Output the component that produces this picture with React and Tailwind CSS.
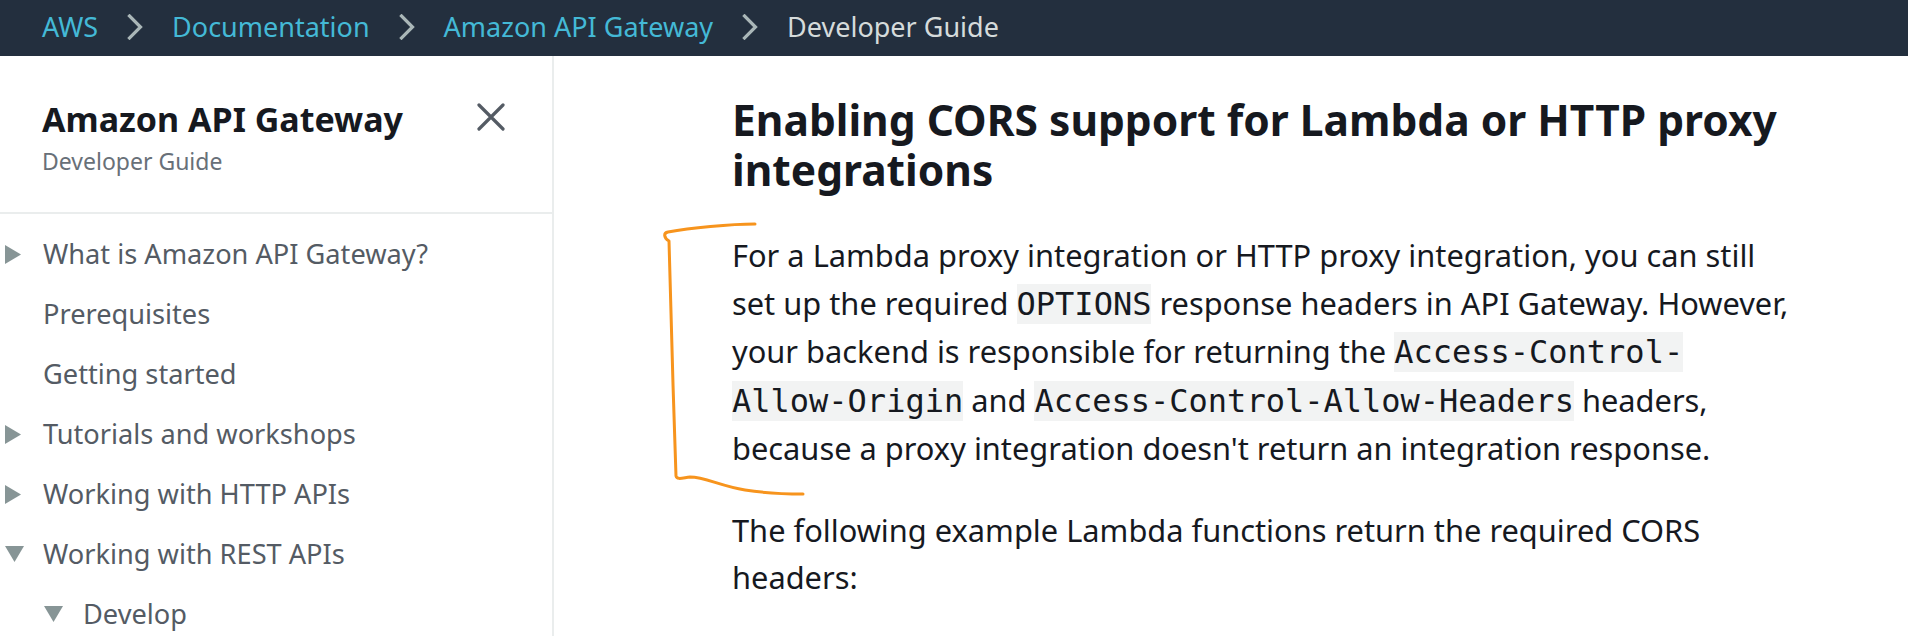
import React from "react";

const Chevron = () => (
  <svg width="16" height="26" viewBox="0 0 16 26" className="shrink-0">
    <polyline points="2.5,2 13.5,13 2.5,24" fill="none" stroke="#aab7b8" strokeWidth="3.2" strokeLinecap="square" />
  </svg>
);

const TriRight = () => (
  <svg width="16" height="19" viewBox="0 0 16 19">
    <polygon points="0,0 16,9.5 0,19" fill="#879596" />
  </svg>
);

const TriDown = () => (
  <svg width="19" height="16" viewBox="0 0 19 16">
    <polygon points="0,0 19,0 9.5,16" fill="#879596" />
  </svg>
);

const Code = ({ children }) => (
  <span className="font-['DejaVu_Sans_Mono',monospace] text-[32px] bg-[#f2f3f3] py-px text-[#16191f]">{children}</span>
);

function NavItem({ icon, indent = false, children }) {
  return (
    <div className="flex items-center h-[60px]">
      <div className={indent ? "w-[83px] flex items-center pl-[44px]" : "w-[43px] flex items-center pl-[5px]"}>
        {icon === "right" && <TriRight />}
        {icon === "down" && <TriDown />}
      </div>
      <span className="text-[27.2px] leading-[60px] text-[#545b64] whitespace-nowrap">{children}</span>
    </div>
  );
}

export default function App() {
  return (
    <div className="relative w-[1908px] h-[636px] overflow-hidden bg-white font-['Noto_Sans',sans-serif]">
      <header className="h-[56px] bg-[#232f3e] flex items-center gap-[29px] pl-[42px] pb-[3px] text-[27px] leading-[40px] whitespace-nowrap">
        <span className="text-[#44b9d6]">AWS</span>
        <Chevron />
        <span className="text-[#44b9d6]">Documentation</span>
        <Chevron />
        <span className="text-[#44b9d6]">Amazon API Gateway</span>
        <Chevron />
        <span className="text-[#d5dbdb]">Developer Guide</span>
      </header>
      <div className="flex h-[580px]">
        <aside className="w-[554px] shrink-0 border-r-2 border-[#eaeded]">
          <div className="h-[158px] border-b-2 border-[#eaeded] pt-[43px] pl-[42px] pr-[47px] flex justify-between items-start">
            <div>
              <div className="text-[34px] leading-[40px] font-bold text-[#16191f] whitespace-nowrap">Amazon API Gateway</div>
              <div className="mt-[6px] text-[23px] leading-[32px] text-[#687078]">Developer Guide</div>
            </div>
            <svg width="28" height="28" viewBox="0 0 28 28" className="mt-[4px]">
              <path d="M2 2 L26 26 M26 2 L2 26" stroke="#545b64" strokeWidth="3.2" strokeLinecap="round" />
            </svg>
          </div>
          <nav className="pt-[10px]">
            <NavItem icon="right">What is Amazon API Gateway?</NavItem>
            <NavItem>Prerequisites</NavItem>
            <NavItem>Getting started</NavItem>
            <NavItem icon="right">Tutorials and workshops</NavItem>
            <NavItem icon="right">Working with HTTP APIs</NavItem>
            <NavItem icon="down">Working with REST APIs</NavItem>
            <NavItem icon="down" indent>Develop</NavItem>
          </nav>
        </aside>
        <main className="pl-[178px] pt-[39px] text-[#16191f]">
          <h1 className="text-[42.5px] leading-[50px] font-bold whitespace-nowrap">
            <span className="block">Enabling CORS support for Lambda or HTTP proxy</span>
            <span className="block">integrations</span>
          </h1>
          <p className="mt-[37px] text-[30.8px] leading-[47.5px] whitespace-nowrap">
            For a Lambda proxy integration or HTTP proxy integration, you can still
            <br />
            set up the required <Code>OPTIONS</Code> response headers in API Gateway. However,
            <br />
            your backend is responsible for returning the <Code>Access-Control-</Code>
            <br />
            <Code>Allow-Origin</Code> and <Code>Access-Control-Allow-Headers</Code> headers,
            <br />
            because a proxy integration doesn't return an integration response.
          </p>
          <p className="mt-[34px] text-[30.8px] leading-[47px] whitespace-nowrap">
            The following example Lambda functions return the required CORS
            <br />
            headers:
          </p>
        </main>
      </div>
      <svg className="absolute left-0 top-0 pointer-events-none" width="1908" height="636" viewBox="0 0 1908 636">
        <path
          d="M755 224 C 730 224, 690 228, 668 232 C 663 233, 664 238, 669 241 C 671 300, 673 400, 676 476 C 677 480, 682 478, 690 477 C 705 477, 720 486, 745 490 C 770 494, 790 494, 803 494"
          fill="none"
          stroke="#f7941d"
          strokeWidth="3"
          strokeLinecap="round"
          strokeLinejoin="round"
        />
      </svg>
    </div>
  );
}
